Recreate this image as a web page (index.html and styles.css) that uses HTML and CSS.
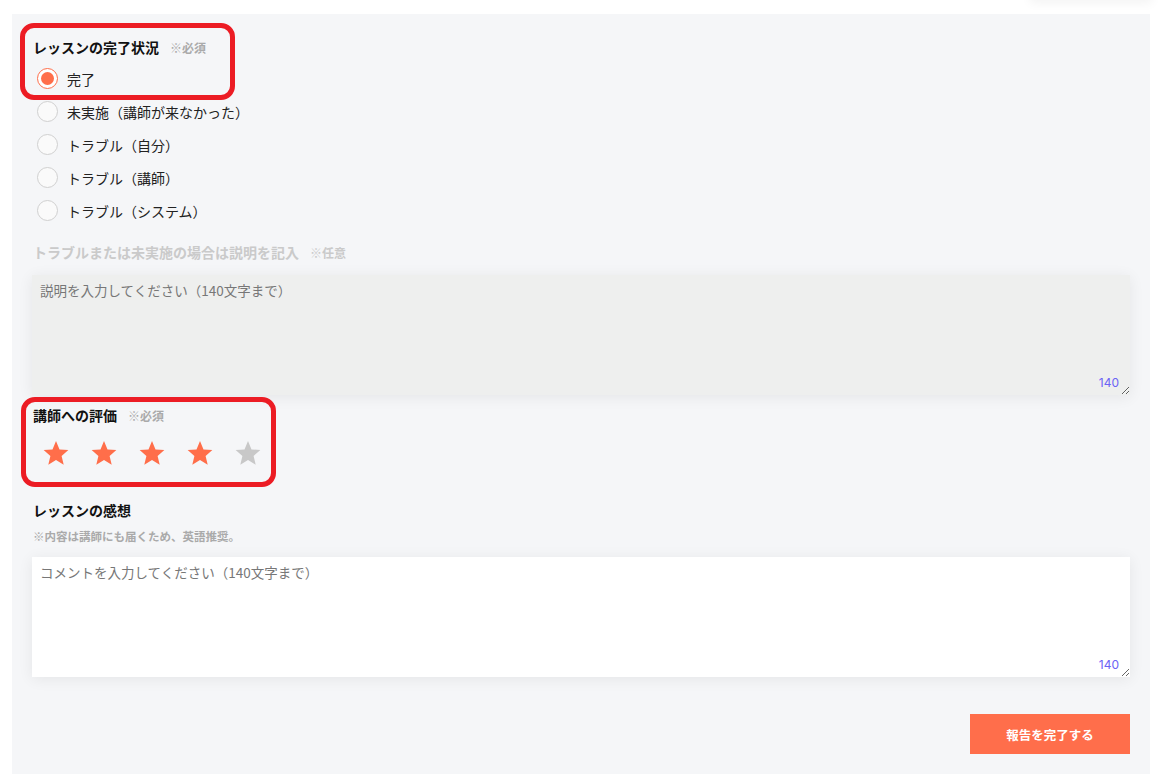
FILE: index.html
```html
<!DOCTYPE html>
<html lang="ja">
<head>
    <meta charset="UTF-8">
    <meta name="viewport" content="width=device-width, initial-scale=1.0">
    <title>レッスン報告</title>
    <link rel="stylesheet" href="styles.css">
</head>
<body>
    <div class="menu_edge"></div>
    <form class="panel">
        <div class="title first">レッスンの完了状況<span class="mark">※必須</span></div>
        <ul class="radio_list">
            <li><label><input type="radio" name="status" checked><span class="dot"></span>完了</label></li>
            <li><label><input type="radio" name="status"><span class="dot"></span>未実施（講師が来なかった）</label></li>
            <li><label><input type="radio" name="status"><span class="dot"></span>トラブル（自分）</label></li>
            <li><label><input type="radio" name="status"><span class="dot"></span>トラブル（講師）</label></li>
            <li><label><input type="radio" name="status"><span class="dot"></span>トラブル（システム）</label></li>
        </ul>

        <div class="title faded">トラブルまたは未実施の場合は説明を記入<span class="mark">※任意</span></div>
        <div class="text_box">
            <textarea class="disabled" placeholder="説明を入力してください（140文字まで）" disabled></textarea>
            <span class="count">140</span>
        </div>

        <div class="title rate_title">講師への評価<span class="mark">※必須</span></div>
        <div class="stars">
            <svg viewBox="0 0 24 24" class="star on"><path d="M12 1.8l3 7.1 7.6.6-5.8 5 1.8 7.5L12 18l-6.6 4 1.8-7.5-5.8-5 7.6-.6z"/></svg>
            <svg viewBox="0 0 24 24" class="star on"><path d="M12 1.8l3 7.1 7.6.6-5.8 5 1.8 7.5L12 18l-6.6 4 1.8-7.5-5.8-5 7.6-.6z"/></svg>
            <svg viewBox="0 0 24 24" class="star on"><path d="M12 1.8l3 7.1 7.6.6-5.8 5 1.8 7.5L12 18l-6.6 4 1.8-7.5-5.8-5 7.6-.6z"/></svg>
            <svg viewBox="0 0 24 24" class="star on"><path d="M12 1.8l3 7.1 7.6.6-5.8 5 1.8 7.5L12 18l-6.6 4 1.8-7.5-5.8-5 7.6-.6z"/></svg>
            <svg viewBox="0 0 24 24" class="star"><path d="M12 1.8l3 7.1 7.6.6-5.8 5 1.8 7.5L12 18l-6.6 4 1.8-7.5-5.8-5 7.6-.6z"/></svg>
        </div>

        <div class="title impression">レッスンの感想</div>
        <div class="note">※内容は講師にも届くため、英語推奨。</div>
        <div class="text_box comment">
            <textarea placeholder="コメントを入力してください（140文字まで）"></textarea>
            <span class="count">140</span>
        </div>

        <div class="btn_row">
            <button type="button" class="btn_done">報告を完了する</button>
        </div>
    </form>

    <!-- 注釈の赤枠 -->
    <div class="mark_box box1"></div>
    <div class="mark_box box2"></div>
</body>
</html>
```

FILE: styles.css
```css
*{
    margin:0;
    padding:0;
    box-sizing: border-box;
}
body{
    background-color: #fff;
    font-family: "Noto Sans CJK JP", "Noto Sans", sans-serif;
    color: #222;
    position: relative;
    overflow: hidden;
    height: 783px;
}
.menu_edge{
    position: absolute;
    top: -40px;
    left: 1030px;
    width: 122px;
    height: 40px;
    background-color: #fff;
    box-shadow: 0 3px 10px rgba(0,0,0,0.05);
}
.panel{
    margin: 14px 13px 0 12px;
    padding: 23px 20px 20px;
    background-color: #f5f6f8;
}
.title{
    font-size: 14px;
    font-weight: bold;
    line-height: 20px;
    color: #111;
    padding-left: 1px;
}
.mark{
    font-size: 12px;
    color: #aaa;
    margin-left: 11px;
}
.radio_list{
    list-style-type: none;
    margin-top: 4px;
}
.radio_list li{
    height: 33px;
    display: flex;
    align-items: center;
}
.radio_list label{
    display: flex;
    align-items: center;
    font-size: 14px;
    color: #222;
}
.radio_list input{
    display: none;
}
.dot{
    width: 21px;
    height: 21px;
    border-radius: 50%;
    border: 1px solid #d0d0d0;
    background-color: #fafafa;
    margin: 0 9px 0 5px;
    position: relative;
}
input:checked + .dot{
    border-color: #ff6e4a;
    background-color: #fff;
}
input:checked + .dot::after{
    content: "";
    position: absolute;
    left: 3px;
    top: 3px;
    width: 13px;
    height: 13px;
    border-radius: 50%;
    background-color: #ff6e4a;
}
.faded{
    color: #cacaca;
    margin-top: 15px;
}
.faded .mark{
    color: #cacaca;
}
.text_box{
    position: relative;
    margin-top: 12px;
}
textarea{
    display: block;
    width: 100%;
    height: 120px;
    border: none;
    outline: none;
    padding: 5px 8px;
    font-family: "Noto Sans CJK JP", sans-serif;
    font-size: 13.5px;
    background-color: #fff;
    box-shadow: 0 2px 14px rgba(0,0,0,0.07);
}
textarea::placeholder{
    color: #777;
}
textarea.disabled{
    background-color: #eeefee;
}
.count{
    position: absolute;
    right: 11px;
    bottom: 5px;
    font-family: "Inter", sans-serif;
    font-size: 12px;
    color: #6b63f5;
}
.rate_title{
    margin-top: 10px;
}
.stars{
    display: flex;
    gap: 20px;
    margin-top: 13px;
    padding-left: 10px;
}
.star{
    width: 28px;
    height: 28px;
    fill: #c8c8c8;
}
.star.on{
    fill: #ff6e4a;
}
.impression{
    margin-top: 33px;
}
.note{
    margin-top: 8px;
    font-size: 11.5px;
    line-height: 16px;
    font-weight: bold;
    color: #aaa;
    padding-left: 1px;
}
.comment{
    margin-top: 13px;
}
.btn_row{
    display: flex;
    justify-content: flex-end;
    margin-top: 37px;
}
.btn_done{
    width: 160px;
    height: 40px;
    border: none;
    background-color: #ff6e4b;
    color: #fff;
    font-family: "Noto Sans CJK JP", sans-serif;
    font-size: 12.5px;
    font-weight: bold;
}
.mark_box{
    position: absolute;
    border: 5px solid #ec1c24;
    border-radius: 14px;
}
.box1{
    left: 20px;
    top: 23px;
    width: 215px;
    height: 77px;
}
.box2{
    left: 21px;
    top: 397px;
    width: 255px;
    height: 90px;
}
```
